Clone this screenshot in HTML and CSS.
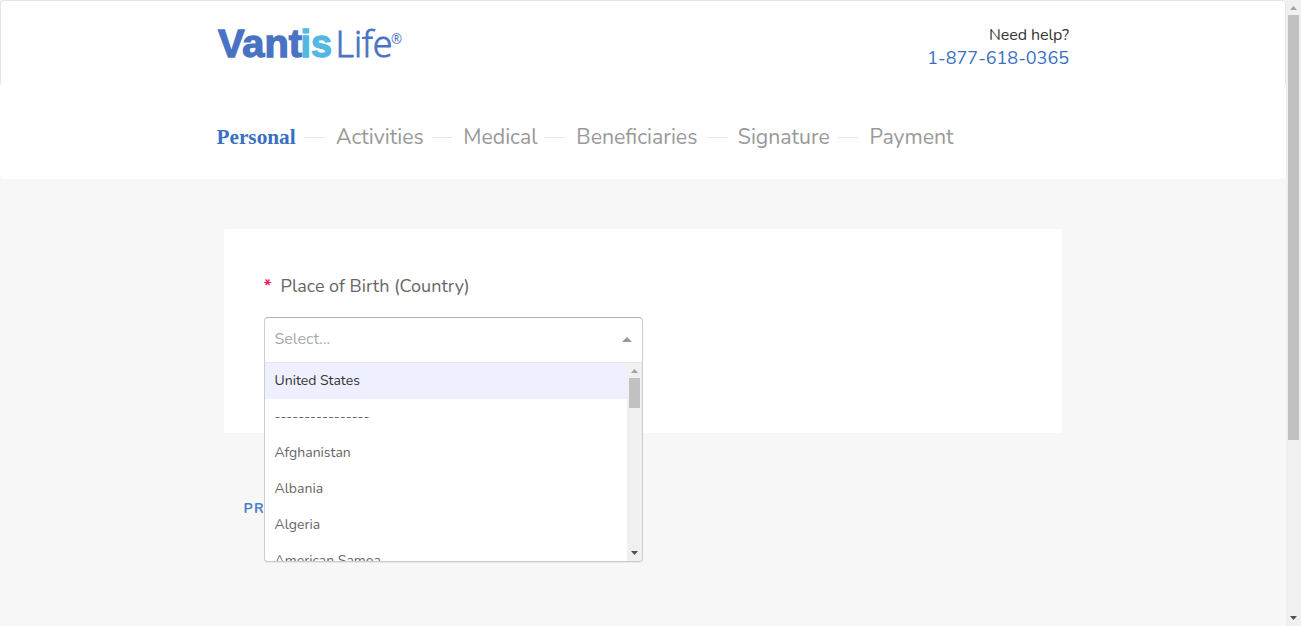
FILE: index.html
```html
<!DOCTYPE html>
<html lang="en">
<head>
<meta charset="utf-8">
<title>Vantis Life</title>
<link rel="stylesheet" href="styles.css">
</head>
<body>
<div class="app">
  <div class="page">
    <header class="header">
      <div class="masthead">
        <svg class="logo" width="190" height="40" viewBox="0 0 190 40" role="img" aria-label="Vantis Life">
          <text class="logo-bold" x="1" y="33" textLength="84" lengthAdjust="spacingAndGlyphs">Vant</text>
          <text class="logo-bold logo-light-blue" x="83.5" y="33" textLength="31.5" lengthAdjust="spacingAndGlyphs">is</text>
          <text class="logo-thin" x="118.5" y="33.3" textLength="57" lengthAdjust="spacingAndGlyphs">Life</text>
          <text class="logo-mark" x="174" y="19.5" textLength="11" lengthAdjust="spacingAndGlyphs">®</text>
        </svg>
        <div class="help">
          <span class="help-label">Need help?</span>
          <a class="help-phone">1-877-618-0365</a>
        </div>
      </div>
      <nav class="steps">
        <span class="step active">Personal</span><i class="dash"></i>
        <span class="step activities">Activities</span><i class="dash"></i>
        <span class="step medical">Medical</span><i class="dash"></i>
        <span class="step beneficiaries">Beneficiaries</span><i class="dash"></i>
        <span class="step signature">Signature</span><i class="dash"></i>
        <span class="step payment">Payment</span>
      </nav>
    </header>
    <main class="card">
      <label class="question"><span class="required">*</span><span class="question-text">Place of Birth (Country)</span></label>
      <div class="select">
        <div class="control"><span class="placeholder">Select...</span><svg class="caret" width="10" height="5" viewBox="0 0 10 5"><path d="M0 5 5 0 10 5Z"/></svg></div>
        <div class="menu">
          <ul class="options">
            <li class="option focused">United States</li>
            <li class="option rule">----------------</li>
            <li class="option">Afghanistan</li>
            <li class="option">Albania</li>
            <li class="option">Algeria</li>
            <li class="option">American Samoa</li>
          </ul>
          <div class="scrollbar">
            <svg class="arrow dim" width="7" height="4" viewBox="0 0 7 4"><path d="M0 4 3.5 0 7 4Z"/></svg>
            <div class="thumb"></div>
            <svg class="arrow down" width="7" height="4" viewBox="0 0 7 4"><path d="M0 0H7L3.5 4Z"/></svg>
          </div>
        </div>
      </div>
    </main>
    <a class="previous">PREVIOUS</a>
  </div>
  <div class="scrollbar page-scrollbar">
    <svg class="arrow dim" width="7" height="4" viewBox="0 0 7 4"><path d="M0 4 3.5 0 7 4Z"/></svg>
    <div class="thumb"></div>
    <svg class="arrow down" width="7" height="4" viewBox="0 0 7 4"><path d="M0 0H7L3.5 4Z"/></svg>
  </div>
</div>
</body>
</html>
```
FILE: styles.css
```css
* { box-sizing: border-box; }
body { margin: 0; font-family: Nunito, Lato, sans-serif; color: #666; background: #f7f7f7; }
.app { display: flex; height: 626px; overflow: hidden; }
.page { width: 1286px; height: 626px; }
.header { height: 179px; background: #fff; border-radius: 4px; }
.masthead { height: 86px; padding: 23px 216px 0 216px; display: flex; justify-content: space-between; border: 1px solid #e5e5e5; border-bottom: 0; border-radius: 4px; }
.logo { display: block; overflow: visible; }
.logo-bold { font: 900 38.5px "Liberation Sans", sans-serif; fill: #4a72c4; stroke: #4a72c4; stroke-width: 1.3px; }
.logo-light-blue { fill: #51b8e2; stroke: #51b8e2; }
.logo-thin { font: 300 36px "Open Sans", sans-serif; fill: #4a72c4; stroke: #4a72c4; stroke-width: .9px; }
.logo-mark { font: 400 14px "Open Sans", sans-serif; fill: #4a72c4; }
.help { display: flex; flex-direction: column; align-items: flex-end; }
.help-label { font-size: 16px; line-height: 22px; color: #333; letter-spacing: -.08px; }
.help-phone { font-size: 18px; line-height: 24px; color: #3870c3; }
.steps { display: flex; align-items: center; height: 30px; margin: 36px 0 0 216.5px; }
.step { width: 79.5px; white-space: nowrap; font-size: 21.28px; line-height: 30px; font-weight: 400; color: #999; }
.active { font: bold 21.28px/30px "Liberation Serif", serif; color: #3870c3; }
.activities { width: 87.3px; }
.medical { width: 73px; }
.beneficiaries { width: 121.5px; }
.signature { width: 91.7px; }
.dash { width: 20px; height: 1px; margin: 0 11px 0 9px; background: #e5e5e5; flex: none; }
.card { width: 838px; height: 204px; margin: 50px 0 0 224px; padding: 44px 40px 0; background: #fff; border-radius: 2px; }
.question { display: flex; height: 26px; line-height: 26px; font-size: 18px; color: #666; }
.required { width: 17px; color: #ff1451; font-weight: 700; margin-left: -.5px; }
.question-text { letter-spacing: -.01px; }
.select { position: relative; width: 379px; margin-top: 18px; }
.control { display: flex; align-items: center; justify-content: space-between; height: 45px; padding: 0 10px 2px 9.5px; background: #fff; border: 1px solid #b3b3b3; border-color: #b3b3b3 #ccc; border-bottom: 0; border-radius: 4px 4px 0 0; }
.placeholder { font-size: 16px; color: #aaa; }
.caret { fill: #999; }
.menu { position: absolute; top: 45px; left: 0; width: 379px; height: 200px; display: flex; background: #fff; border: 1px solid #ccc; border-top-color: #e6e6e6; border-radius: 0 0 4px 4px; box-shadow: 0 1px 0 rgba(0,0,0,.06); overflow: hidden; }
.options { list-style: none; margin: 0; padding: 0; flex: 1; }
.option { height: 36px; line-height: 35px; padding-left: 9.5px; font-size: 14px; color: #666; }
.focused { background: #eff0ff; color: #333; }
.scrollbar { width: 15px; display: flex; flex-direction: column; align-items: center; background: #f0f0f0; padding: 6px 0; }
.arrow { fill: #505050; flex: none; }
.dim { fill: #a3a3a3; }
.thumb { width: 11px; height: 30px; margin-top: 5px; background: #c1c1c1; }
.down { margin-top: auto; }
.page-scrollbar .thumb { height: 425px; }
.previous { display: block; width: 100px; margin: 67px 0 0 243.5px; font-size: 14px; line-height: 18px; font-weight: 700; letter-spacing: 1.4px; color: #4a80cb; }
```
